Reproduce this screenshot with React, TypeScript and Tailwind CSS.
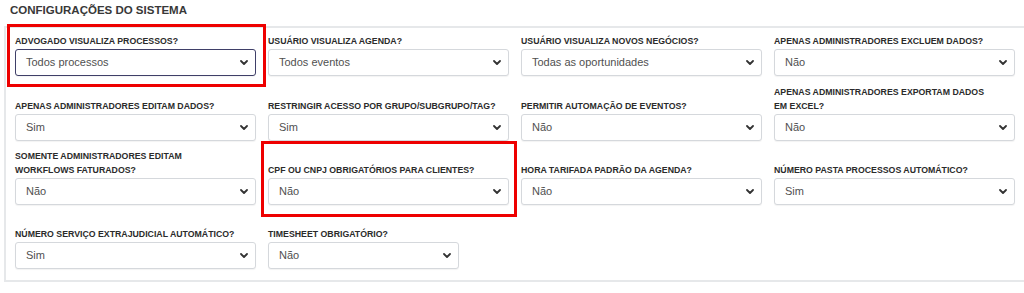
import React from "react"

type Field = {
    label: string[]
    value: string
    focused?: boolean
    marked?: "a" | "b"
    narrow?: boolean
}

const rows: { tall: boolean; gap: string; fields: Field[] }[] = [
    {
        tall: false,
        gap: "",
        fields: [
            { label: ["ADVOGADO VISUALIZA PROCESSOS?"], value: "Todos processos", focused: true, marked: "a" },
            { label: ["USUÁRIO VISUALIZA AGENDA?"], value: "Todos eventos" },
            { label: ["USUÁRIO VISUALIZA NOVOS NEGÓCIOS?"], value: "Todas as oportunidades" },
            { label: ["APENAS ADMINISTRADORES EXCLUEM DADOS?"], value: "Não" },
        ],
    },
    {
        tall: true,
        gap: "mt-[9px]",
        fields: [
            { label: ["APENAS ADMINISTRADORES EDITAM DADOS?"], value: "Sim" },
            { label: ["RESTRINGIR ACESSO POR GRUPO/SUBGRUPO/TAG?"], value: "Sim" },
            { label: ["PERMITIR AUTOMAÇÃO DE EVENTOS?"], value: "Não" },
            { label: ["APENAS ADMINISTRADORES EXPORTAM DADOS", "EM EXCEL?"], value: "Não" },
        ],
    },
    {
        tall: true,
        gap: "mt-[8px]",
        fields: [
            { label: ["SOMENTE ADMINISTRADORES EDITAM", "WORKFLOWS FATURADOS?"], value: "Não" },
            { label: ["CPF OU CNPJ OBRIGATÓRIOS PARA CLIENTES?"], value: "Não", marked: "b" },
            { label: ["HORA TARIFADA PADRÃO DA AGENDA?"], value: "Não" },
            { label: ["NÚMERO PASTA PROCESSOS AUTOMÁTICO?"], value: "Sim" },
        ],
    },
    {
        tall: true,
        gap: "mt-[8px]",
        fields: [
            { label: ["NÚMERO SERVIÇO EXTRAJUDICIAL AUTOMÁTICO?"], value: "Sim" },
            { label: ["TIMESHEET OBRIGATÓRIO?"], value: "Não", narrow: true },
        ],
    },
]

function Chevron() {
    return (
        <svg width="8" height="5" viewBox="0 0 8 5" className="shrink-0">
            <polyline points="1,1 4,4 7,1" fill="none" stroke="#333" strokeWidth="1.8" strokeLinecap="round" strokeLinejoin="round" />
        </svg>
    )
}

function SelectField({ field, tall }: { field: Field; tall: boolean }) {
    return (
        <div className={`relative flex flex-col ${field.narrow ? 'w-[191px]' : ''}`}>
            <div className={`${tall ? 'min-h-[28px]' : ''} flex flex-col justify-end mb-[1px]`}>
                {field.label.map((line) => (
                    <p key={line} className="text-[8.75px] leading-[14px] font-bold text-[#2b2b2b] whitespace-nowrap">{line}</p>
                ))}
            </div>
            <div
                className={`h-[27px] flex items-center justify-between pl-[10px] pr-[7px] bg-white rounded-[3px] border shadow-[0_1px_1px_rgba(0,0,0,0.05)] ${field.focused ? 'border-[#3f3f68]' : 'border-[#d5d8dc]'}`}
            >
                <span className="text-[11px] text-[#505050]">{field.value}</span>
                <Chevron />
            </div>
            {field.marked === "a" && (
                <span className="absolute -left-[8px] -right-[10px] -top-[10px] -bottom-[11px] border-[3px] border-[#ee0000] pointer-events-none" />
            )}
            {field.marked === "b" && (
                <span className="absolute -left-[7px] -right-[8px] -top-[8px] -bottom-[12px] border-[3px] border-[#ee0000] pointer-events-none" />
            )}
        </div>
    )
}

export default function App() {
    return (
        <div className="w-[1024px] h-[293px] overflow-hidden bg-white pt-[2px]" style={{ fontFamily: '"Liberation Sans", Arial, sans-serif' }}>
            <h1 className="pl-[10px] text-[11.5px] leading-[16px] font-bold text-[#383838] uppercase">Configurações do Sistema</h1>

            <div className="mt-[8px] ml-[4px] w-[1040px] border-2 border-[#e6e8ea] pl-[9px] pt-[6px] pb-[11px]">
                {rows.map((row, i) => (
                    <div key={i} className={`grid grid-cols-[241px_241px_241px_241px] gap-x-[12px] items-end ${row.gap}`}>
                        {row.fields.map((f) => (
                            <SelectField key={f.label.join(' ')} field={f} tall={row.tall} />
                        ))}
                    </div>
                ))}
            </div>
        </div>
    )
}
